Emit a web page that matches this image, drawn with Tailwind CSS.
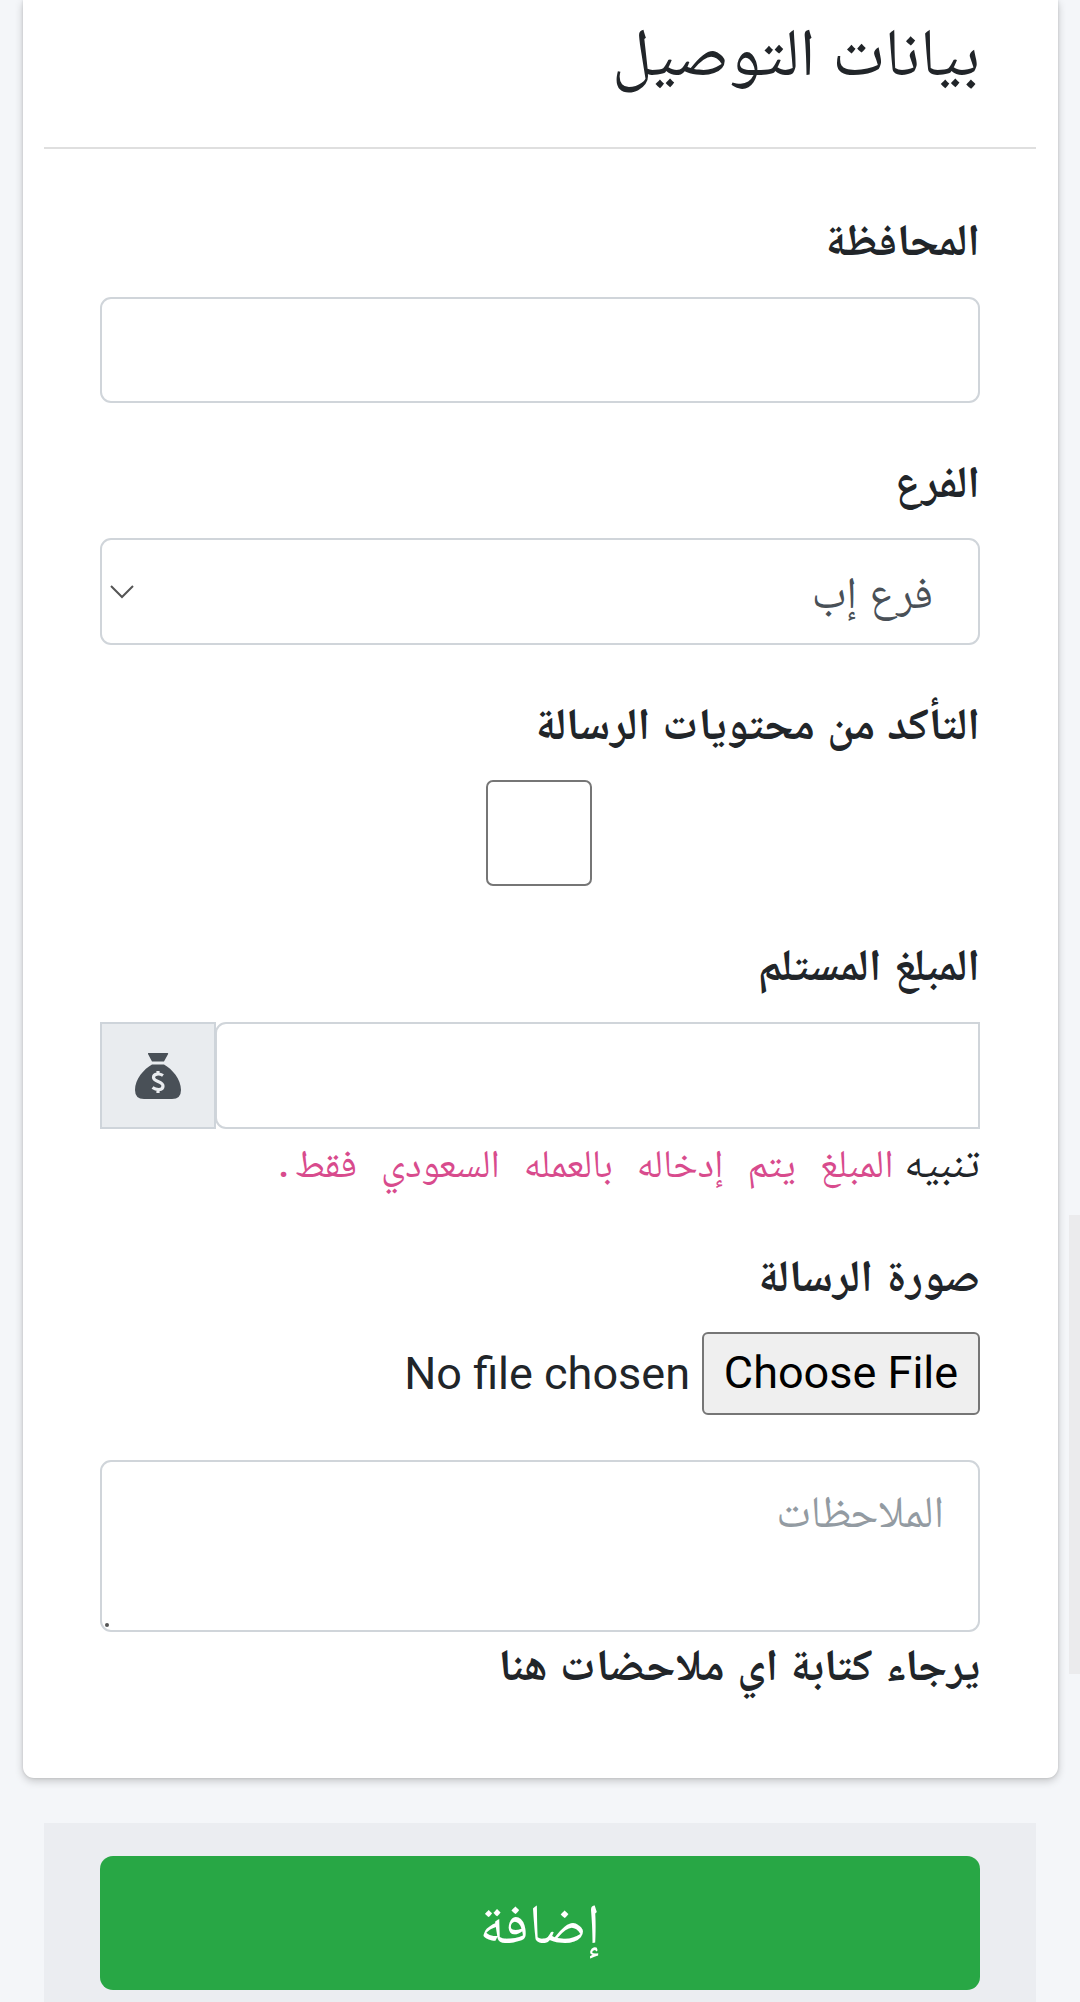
<!DOCTYPE html>
<html lang="ar" dir="rtl">
<head>
<meta charset="utf-8">
<title>بيانات التوصيل</title>
<script src="https://cdn.jsdelivr.net/npm/@tailwindcss/browser@4"></script>
</head>
<body class="relative h-[2002px] overflow-hidden bg-[#f4f6f9] font-[Roboto,'Noto_Naskh_Arabic',sans-serif] text-[44.6px] leading-[66px] text-[#212529]">
  <main class="mr-[22px] ml-[23px] h-[1778px] rounded-b-[11px] bg-white pr-[22px] pl-[21px] shadow-[0_0_3px_rgba(0,0,0,.13),0_3px_8px_rgba(0,0,0,.2)]">
    <header class="h-[149px] border-b-2 border-[#dfdfdf] px-14">
      <h1 class="pt-[12px] text-[67.5px] leading-[80px]">بيانات التوصيل</h1>
    </header>
    <form class="flex flex-col px-14">
      <label class="mt-[58px] h-[90px] font-bold">المحافظة</label>
      <div class="h-[106px] rounded-[11px] border-2 border-[#d0d5da]"></div>

      <label class="mt-[46px] h-[89px] font-bold">الفرع</label>
      <div class="flex h-[107px] items-center justify-between rounded-[11px] border-2 border-[#d0d5da] pr-[45px] pl-2 text-[#495057]">
        <span class="pt-[2px] [word-spacing:1.5px]">فرع إب</span>
        <svg class="h-[14px] w-[24px]" viewBox="0 0 24 14" fill="none" stroke="#555" stroke-width="2"><path d="M1 1l11 11L23 1"/></svg>
      </div>

      <label class="mt-[46px] h-[89px] font-bold [word-spacing:1.3px]">التأكد من محتويات الرسالة</label>
      <div class="mx-auto size-[106px] -translate-x-px rounded-[7px] border-[2.5px] border-[#767676]"></div>

      <label class="mt-[46px] h-[90px] font-bold [word-spacing:1.5px]">المبلغ المستلم</label>
      <div class="flex h-[107px]">
        <div class="-ml-px flex-1 rounded-l-[11px] border-2 border-[#d0d5da]"></div>
        <div class="flex w-[116px] items-center justify-center border-2 border-[#ced4da] bg-[#e9ecef]">
          <svg class="size-[46px]" viewBox="0 0 46 46" fill="#495057"><path d="M13.5 0h19q1 0 .6 1L29 8.600H17L13 1q-.4-1 .5-1zM17 11.500h12C37 16 46 26 46 37q0 9-9 9H9q-9 0-9-9C0 26 9 16 17 11.500z"/><path d="M28 22.500C25 20.500 18.500 20 18.500 24.500S28 28 28 33S21 37 17.500 34.500M23 18v3M23 36v4" fill="none" stroke="#e9ecef" stroke-width="3.200"/></svg>
        </div>
      </div>
      <p class="h-[65px] text-[43.5px] whitespace-nowrap">تنبيه <code class="font-[Roboto_Mono,'Noto_Naskh_Arabic',monospace] text-[39.3px] text-[#d84b8d] [word-spacing:.4px]">المبلغ يتم إدخاله بالعمله السعودي فقط.</code></p>

      <label class="mt-[49px] h-[89px] font-bold [word-spacing:3px]">صورة الرسالة</label>
      <div class="flex h-[83px] items-center text-[45px]">
        <span class="flex h-[83px] w-[278px] items-center justify-center rounded-[6px] border-2 border-[#767676] bg-[#efefef] pb-[2px] text-black" dir="ltr">Choose File</span>
        <span class="mr-3" dir="ltr">No file chosen</span>
      </div>

      <div class="relative mt-[45px] h-[172px] rounded-[11px] border-2 border-[#d0d5da] px-[34px] pt-[17px] text-[#939ba2]">
        الملاحظات
        <i class="absolute bottom-[3px] left-[3px] size-[4px] rounded-full bg-[#555]"></i>
      </div>
      <p class="font-bold [word-spacing:1.5px]">يرجاء كتابة اي ملاحضات هنا</p>
    </form>
  </main>
  <footer class="mx-[44px] mt-[45px] h-[180px] bg-[#ebedf1] px-14 pt-[33px]">
    <button class="block h-[134px] w-full rounded-[13px] bg-[#28a745] pt-px text-[56px] text-white">إضافة</button>
  </footer>
  <div class="absolute top-[1215px] right-0 h-[459px] w-[11px] bg-[#ebebed]"></div>
</body>
</html>
